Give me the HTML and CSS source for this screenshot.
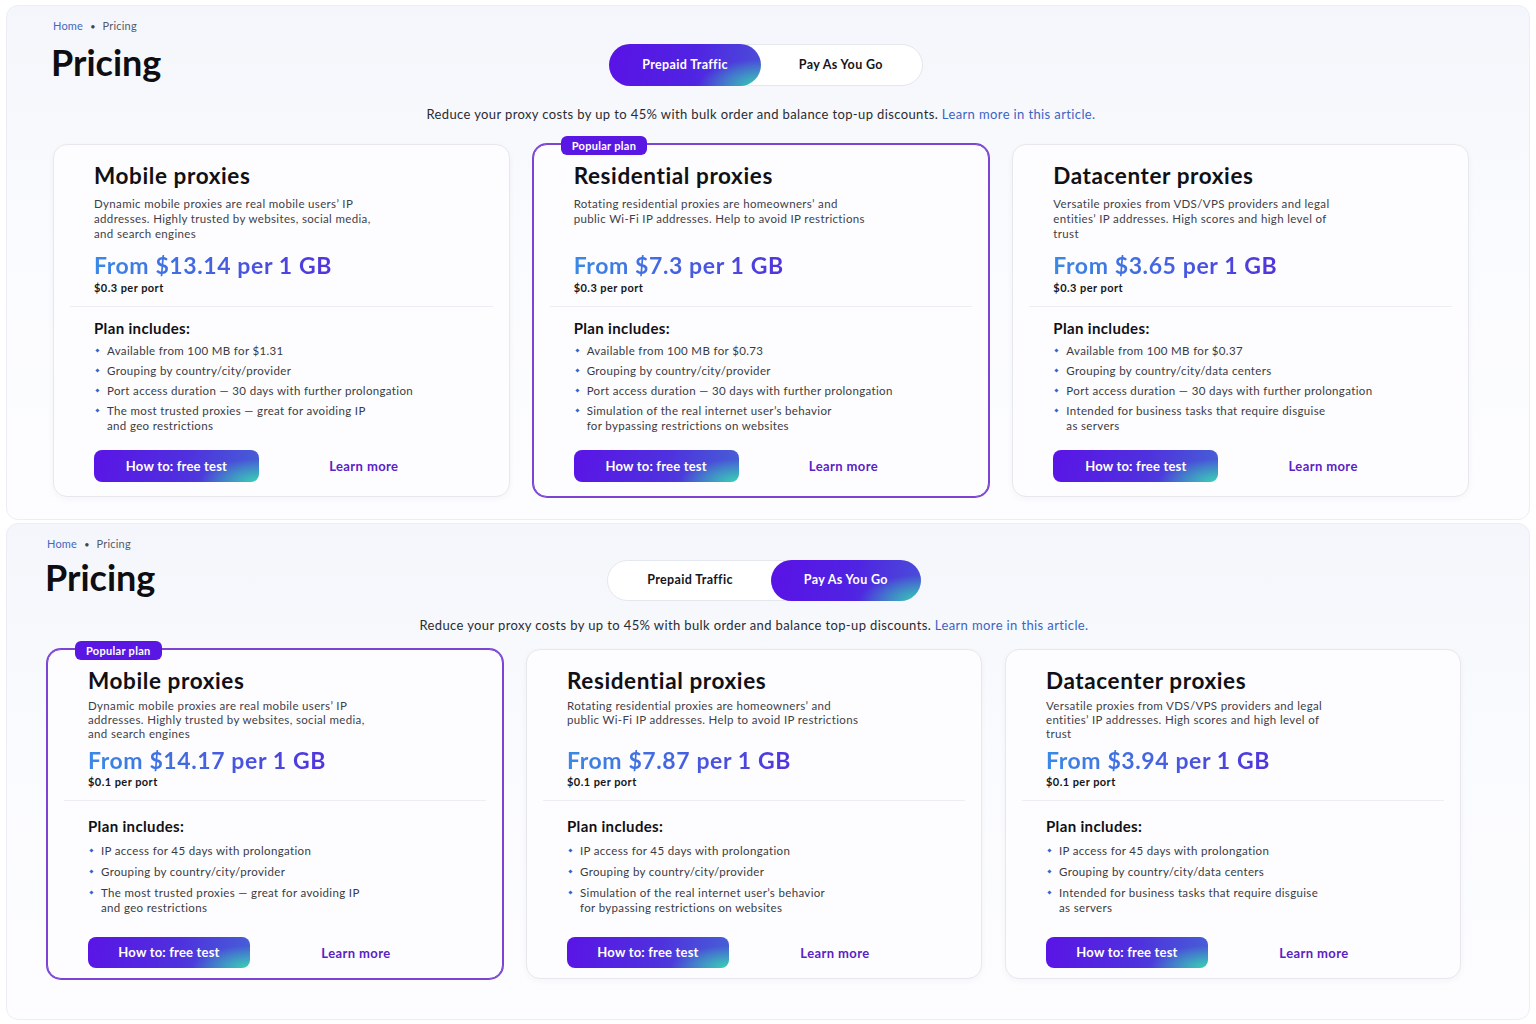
FILE: index.html
```html
<!DOCTYPE html>
<html lang="en">
<head>
  <meta charset="UTF-8">
  <title>Pricing</title>
  <link rel="stylesheet" href="styles.css">
</head>
<body>
  <!-- prepaid traffic tab -->
  <section class="panel">
    <div class="crumbs"><a href="#">Home</a><span class="dot">•</span><span>Pricing</span></div>
    <div class="head">
      <h1>Pricing</h1>
      <div class="switch">
        <button class="tab on">Prepaid Traffic</button>
        <button class="tab">Pay As You Go</button>
      </div>
    </div>
    <p class="lead">Reduce your proxy costs by up to 45% with bulk order and balance top-up discounts. <a href="#">Learn more in this article.</a></p>
    <div class="cards">
      <div class="card">
        <h2>Mobile proxies</h2>
        <p class="desc">Dynamic mobile proxies are real mobile users’ IP<br>addresses. Highly trusted by websites, social media,<br>and search engines</p>
        <div class="price">From $13.14 per 1 GB</div>
        <div class="port">$0.3 per port</div>
        <div class="line"></div>
        <h3>Plan includes:</h3>
        <ul class="feats">
          <li>Available from 100 MB for $1.31</li>
          <li>Grouping by country/city/provider</li>
          <li>Port access duration — 30 days with further prolongation</li>
          <li>The most trusted proxies — great for avoiding IP<br>and geo restrictions</li>
        </ul>
        <div class="actions"><a class="btn" href="#">How to: free test</a><a class="more" href="#">Learn more</a></div>
      </div>
      <div class="card popular">
        <span class="badge">Popular plan</span>
        <h2>Residential proxies</h2>
        <p class="desc">Rotating residential proxies are homeowners’ and<br>public Wi-Fi IP addresses. Help to avoid IP restrictions</p>
        <div class="price">From $7.3 per 1 GB</div>
        <div class="port">$0.3 per port</div>
        <div class="line"></div>
        <h3>Plan includes:</h3>
        <ul class="feats">
          <li>Available from 100 MB for $0.73</li>
          <li>Grouping by country/city/provider</li>
          <li>Port access duration — 30 days with further prolongation</li>
          <li>Simulation of the real internet user’s behavior<br>for bypassing restrictions on websites</li>
        </ul>
        <div class="actions"><a class="btn" href="#">How to: free test</a><a class="more" href="#">Learn more</a></div>
      </div>
      <div class="card">
        <h2>Datacenter proxies</h2>
        <p class="desc">Versatile proxies from VDS/VPS providers and legal<br>entities’ IP addresses. High scores and high level of<br>trust</p>
        <div class="price">From $3.65 per 1 GB</div>
        <div class="port">$0.3 per port</div>
        <div class="line"></div>
        <h3>Plan includes:</h3>
        <ul class="feats">
          <li>Available from 100 MB for $0.37</li>
          <li>Grouping by country/city/data centers</li>
          <li>Port access duration — 30 days with further prolongation</li>
          <li>Intended for business tasks that require disguise<br>as servers</li>
        </ul>
        <div class="actions"><a class="btn" href="#">How to: free test</a><a class="more" href="#">Learn more</a></div>
      </div>
    </div>
  </section>

  <!-- pay as you go tab -->
  <section class="panel tight">
    <div class="crumbs"><a href="#">Home</a><span class="dot">•</span><span>Pricing</span></div>
    <div class="head">
      <h1>Pricing</h1>
      <div class="switch">
        <button class="tab">Prepaid Traffic</button>
        <button class="tab on">Pay As You Go</button>
      </div>
    </div>
    <p class="lead">Reduce your proxy costs by up to 45% with bulk order and balance top-up discounts. <a href="#">Learn more in this article.</a></p>
    <div class="cards">
      <div class="card popular">
        <span class="badge">Popular plan</span>
        <h2>Mobile proxies</h2>
        <p class="desc">Dynamic mobile proxies are real mobile users’ IP<br>addresses. Highly trusted by websites, social media,<br>and search engines</p>
        <div class="price">From $14.17 per 1 GB</div>
        <div class="port">$0.1 per port</div>
        <div class="line"></div>
        <h3>Plan includes:</h3>
        <ul class="feats">
          <li>IP access for 45 days with prolongation</li>
          <li>Grouping by country/city/provider</li>
          <li>The most trusted proxies — great for avoiding IP<br>and geo restrictions</li>
        </ul>
        <div class="actions"><a class="btn" href="#">How to: free test</a><a class="more" href="#">Learn more</a></div>
      </div>
      <div class="card">
        <h2>Residential proxies</h2>
        <p class="desc">Rotating residential proxies are homeowners’ and<br>public Wi-Fi IP addresses. Help to avoid IP restrictions</p>
        <div class="price">From $7.87 per 1 GB</div>
        <div class="port">$0.1 per port</div>
        <div class="line"></div>
        <h3>Plan includes:</h3>
        <ul class="feats">
          <li>IP access for 45 days with prolongation</li>
          <li>Grouping by country/city/provider</li>
          <li>Simulation of the real internet user’s behavior<br>for bypassing restrictions on websites</li>
        </ul>
        <div class="actions"><a class="btn" href="#">How to: free test</a><a class="more" href="#">Learn more</a></div>
      </div>
      <div class="card">
        <h2>Datacenter proxies</h2>
        <p class="desc">Versatile proxies from VDS/VPS providers and legal<br>entities’ IP addresses. High scores and high level of<br>trust</p>
        <div class="price">From $3.94 per 1 GB</div>
        <div class="port">$0.1 per port</div>
        <div class="line"></div>
        <h3>Plan includes:</h3>
        <ul class="feats">
          <li>IP access for 45 days with prolongation</li>
          <li>Grouping by country/city/data centers</li>
          <li>Intended for business tasks that require disguise<br>as servers</li>
        </ul>
        <div class="actions"><a class="btn" href="#">How to: free test</a><a class="more" href="#">Learn more</a></div>
      </div>
    </div>
  </section>
</body>
</html>
```

FILE: styles.css
```css
*{
  box-sizing: border-box;
}
html,body,h1,h2,h3,p,ul{
  margin: 0;
  padding: 0;
}
body{
  background: #fff;
  font-family: Lato, "Noto Sans", sans-serif;
  color: #17171c;
  padding: 5px 6px 4px;
}
a{
  text-decoration: none;
}

.panel{
  border: 1px solid #eceef3;
  border-radius: 12px;
  background: linear-gradient(180deg, #f5f6fb 0%, #fafbfe 45%, #fdfdff 100%);
  padding: 13px 60px 22px 46px;
}
.panel + .panel{
  margin-top: 3px;
}
.panel.tight{
  padding: 13px 68px 40px 40px;
}

/* breadcrumbs + title row */
.crumbs{
  font-size: 11px;
  line-height: 14px;
  letter-spacing: .2px;
  color: #555a63;
}
.crumbs a{
  color: #4469bd;
}
.crumbs .dot{
  margin: 0 7px;
  font-size: 9px;
  color: #444;
}
.head{
  display: grid;
  grid-template-columns: 1fr auto 1fr;
  align-items: start;
  margin-top: 8px;
}
.tight .head{
  margin-top: 5px;
}
.head h1{
  margin-left: -2px;
  font-size: 36px;
  line-height: 40px;
  font-weight: 700;
  color: #0d0d12;
}
.switch{
  display: flex;
  height: 42px;
  margin-top: 2px;
  margin-left: 10px;
  border: 1px solid #e5e7ee;
  border-radius: 21px;
  background: #fff;
}
.tight .switch{
  height: 41px;
  margin-top: 3px;
  margin-left: 20px;
}
.tab{
  border: 0;
  background: none;
  border-radius: 21px;
  padding: 0 39px;
  font: 700 12.5px/1 Lato, sans-serif;
  letter-spacing: .35px;
  color: #15151a;
  cursor: pointer;
}
.tab.on{
  margin: -1px;
  padding: 0 33px;
  color: #fff;
  background:
    radial-gradient(ellipse 55% 85% at 100% 100%, #35d0b4 0%, rgba(53,208,180,.55) 35%, rgba(53,208,180,0) 75%),
    linear-gradient(100deg, #5a12e6 0%, #5023e2 55%, #4a4fd8 100%);
}

.lead{
  margin-top: 20px;
  text-align: center;
  font-size: 13px;
  line-height: 16px;
  letter-spacing: .38px;
  color: #2a2b31;
}
.lead a{
  color: #3a63c6;
}
.tight .lead{
  margin-top: 16px;
}

/* plan cards */
.cards{
  display: grid;
  grid-template-columns: repeat(3, 1fr);
  gap: 23px;
  margin-top: 22px;
}
.tight .cards{
  margin-top: 16px;
}
.card{
  position: relative;
  background: #fdfdff;
  border: 1px solid #e6e8ee;
  border-radius: 14px;
  padding: 17px 40px 14px;
  box-shadow: 0 2px 6px rgba(30, 40, 80, .04);
}
.tight .card{
  padding-bottom: 10px;
}
.card.popular{
  border-color: #7c44d3;
  box-shadow: 0 0 0 1px #7c44d3;
}
.badge{
  position: absolute;
  top: -9px;
  left: 27px;
  height: 19px;
  padding: 0 11px;
  border-radius: 6px;
  background: #5a17e4;
  color: #fff;
  font-size: 11px;
  font-weight: 700;
  letter-spacing: .3px;
  line-height: 19px;
}
.card h2{
  font-size: 22.5px;
  line-height: 28px;
  font-weight: 700;
  letter-spacing: .6px;
  color: #101015;
}
.desc{
  margin-top: 6px;
  min-height: 45px;
  font-size: 11.5px;
  line-height: 15px;
  letter-spacing: .35px;
  color: #3f4048;
}
.tight .desc{
  margin-top: 4px;
  min-height: 42px;
  line-height: 14px;
}
.price{
  margin-top: 10px;
  font-size: 23px;
  line-height: 28px;
  font-weight: 700;
  letter-spacing: .6px;
  background: linear-gradient(100deg, #3a8ae6 0%, #4466e0 45%, #5132dc 100%);
  -webkit-background-clip: text;
  background-clip: text;
  color: transparent;
  display: inline-block;
}
.tight .price{
  margin-top: 5px;
}
.port{
  margin-top: 2px;
  font-size: 11px;
  line-height: 14px;
  font-weight: 700;
  letter-spacing: .45px;
  color: #15151a;
}
.tight .port{
  margin-top: 1px;
}
.line{
  height: 1px;
  margin: 11px -24px 0;
  background: #eceef3;
}
.card h3{
  margin-top: 12px;
  font-size: 15px;
  line-height: 18px;
  font-weight: 700;
  letter-spacing: .35px;
  color: #101015;
}
.tight .card h3{
  margin-top: 16px;
}
.feats{
  list-style: none;
  margin-top: 6px;
  display: flex;
  flex-direction: column;
  gap: 5px;
}
.tight .feats{
  margin-top: 8px;
  gap: 6px;
}
.feats li{
  position: relative;
  padding-left: 13px;
  font-size: 11.5px;
  line-height: 15px;
  letter-spacing: .35px;
  color: #3a3b42;
}
.feats li::before{
  content: "";
  position: absolute;
  left: 2px;
  top: 6px;
  width: 3px;
  height: 3px;
  background: #3566cc;
  transform: rotate(45deg);
}
.actions{
  display: flex;
  align-items: center;
  margin-top: 17px;
}
.tight .actions{
  margin-top: 22px;
}
.btn{
  width: 165px;
  height: 32px;
  border-radius: 8px;
  color: #fff;
  font-size: 13px;
  font-weight: 700;
  letter-spacing: .2px;
  line-height: 32px;
  text-align: center;
  background:
    radial-gradient(ellipse 45% 90% at 100% 100%, #38d3b3 0%, rgba(56,211,179,.5) 40%, rgba(56,211,179,0) 80%),
    linear-gradient(100deg, #5a14e6 0%, #4f30de 55%, #4660d6 100%);
}
.tight .btn{
  width: 162px;
  height: 31px;
  line-height: 31px;
}
.more{
  flex: 1;
  text-align: center;
  font-size: 13px;
  font-weight: 700;
  letter-spacing: .4px;
  color: #5a22c4;
}
```
